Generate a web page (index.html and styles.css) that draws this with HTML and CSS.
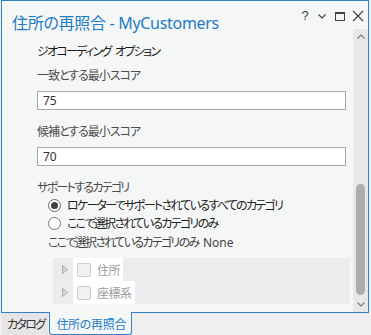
FILE: index.html
```html
<!DOCTYPE html>
<html lang="ja">
<head>
  <meta charset="UTF-8" />
  <title>住所の再照合 - MyCustomers</title>
  <link rel="stylesheet" href="styles.css">
</head>
<body>

  <div class="pane">
    <div class="pane-head">
      <h1 class="pane-title">住所の再照合 - MyCustomers</h1>
      <div class="pane-tools">
        <span class="tool tool-help">?</span>
        <svg class="tool" width="18" height="18" viewBox="0 0 18 18"><polyline points="5.5,7.5 9,11 12.5,7.5" fill="none" stroke="#444" stroke-width="1.2"/></svg>
        <svg class="tool" width="18" height="18" viewBox="0 0 18 18"><rect x="4.5" y="5.5" width="9" height="8" fill="none" stroke="#444" stroke-width="1"/><rect x="4" y="5" width="10" height="2" fill="#444"/></svg>
        <svg class="tool" width="18" height="18" viewBox="0 0 18 18"><path d="M4 4 L14 14 M14 4 L4 14" stroke="#444" stroke-width="1.2"/></svg>
      </div>
    </div>

    <div class="pane-body">
      <div class="options">
        <div class="section-title">ジオコーディング オプション</div>

        <div class="field">
          <div class="field-label">一致とする最小スコア</div>
          <div class="field-input">75</div>
        </div>

        <div class="field">
          <div class="field-label">候補とする最小スコア</div>
          <div class="field-input">70</div>
        </div>

        <div class="category-label">サポートするカテゴリ</div>
        <div class="radio-row">
          <svg width="13" height="13" viewBox="0 0 13 13"><circle cx="6.5" cy="6.5" r="6" fill="#fff" stroke="#666"/><circle cx="6.5" cy="6.5" r="3.5" fill="#404040"/></svg>
          <span>ロケーターでサポートされているすべてのカテゴリ</span>
        </div>
        <div class="radio-row">
          <svg width="13" height="13" viewBox="0 0 13 13"><circle cx="6.5" cy="6.5" r="6" fill="#fff" stroke="#777"/></svg>
          <span>ここで選択されているカテゴリのみ</span>
        </div>

        <div class="selected-note">ここで選択されているカテゴリのみ <span class="latin">None</span></div>

        <div class="category-tree">
          <div class="tree-row">
            <svg class="expander" width="6" height="9" viewBox="0 0 6 9"><path d="M0.5 0.5 L5.5 4.5 L0.5 8.5 Z" fill="#d8d8d8" stroke="#a8a8a8"/></svg>
            <div class="tree-item"><span class="checkbox"></span>住所</div>
          </div>
          <div class="tree-row">
            <svg class="expander" width="6" height="9" viewBox="0 0 6 9"><path d="M0.5 0.5 L5.5 4.5 L0.5 8.5 Z" fill="#d8d8d8" stroke="#a8a8a8"/></svg>
            <div class="tree-item"><span class="checkbox"></span>座標系</div>
          </div>
        </div>
      </div>

      <div class="scrollbar">
        <div class="scroll-btn scroll-up">
          <svg width="8" height="5" viewBox="0 0 8 5"><polyline points="0.5,4.5 4,1 7.5,4.5" fill="none" stroke="#777" stroke-width="1.1"/></svg>
        </div>
        <div class="scroll-track"><div class="scroll-thumb"></div></div>
        <div class="scroll-btn scroll-down">
          <svg width="8" height="5" viewBox="0 0 8 5"><polyline points="0.5,0.5 4,4 7.5,0.5" fill="none" stroke="#777" stroke-width="1.1"/></svg>
        </div>
      </div>
    </div>
  </div>

  <div class="tabs">
    <div class="tab">カタログ</div>
    <div class="tab tab-active">住所の再照合</div>
  </div>

</body>
</html>
```

FILE: styles.css
```css
body {
    margin: 0;
    background-color: #efefef;
    font-family: 'Noto Sans', 'Noto Sans CJK JP', sans-serif;
    font-size: 12px;
    font-feature-settings: "palt";
    letter-spacing: -1.7px;
    word-spacing: 3px;
    color: #333;
}

.latin {
    letter-spacing: 0;
}

.pane {
    margin: 0 2px 0 1px;
    height: 313px;
    box-sizing: border-box;
    border: 1px solid #2f81cc;
    background-color: #f5f7f7;
    display: flex;
    flex-direction: column;
}

.pane-head {
    height: 28px;
    display: flex;
    justify-content: space-between;
    align-items: flex-start;
}

.pane-title {
    margin: 11px 0 0 10px;
    font-size: 16px;
    font-weight: normal;
    line-height: 22px;
    letter-spacing: -0.3px;
    word-spacing: 0;
    color: #1f7bc6;
}

.pane-tools {
    display: flex;
    margin-top: 6px;
    padding-right: 1px;
}

.tool {
    display: block;
}

.tool-help {
    width: 16px;
    text-align: center;
    font-family: 'Liberation Sans', sans-serif;
    font-size: 13px;
    line-height: 18px;
    letter-spacing: 0;
    color: #444;
}

.pane-body {
    flex: 1;
    display: flex;
    overflow: hidden;
}

.options {
    flex: 1;
    padding: 15px 3px 0 35px;
}

.section-title {
    line-height: 16px;
    color: #1a1a1a;
}

.field {
    margin-top: 8px;
}

.field + .field {
    margin-top: 14px;
}

.field-label {
    line-height: 16px;
    letter-spacing: -1px;
    color: #4a4a4a;
}

.field-input {
    margin: 7px 4px 0 0;
    height: 19px;
    box-sizing: border-box;
    border: 1px solid #a8a8a8;
    background-color: #fff;
    padding: 0 5px;
    line-height: 17px;
    letter-spacing: 0;
    color: #333;
}

.category-label {
    margin-top: 14px;
    line-height: 16px;
    color: #4a4a4a;
}

.radio-row {
    display: flex;
    align-items: center;
    gap: 6px;
    height: 18px;
    padding-left: 11px;
    color: #222;
}

.radio-row:first-of-type {
    margin-top: 3px;
}

.selected-note {
    margin-top: 3px;
    padding-left: 11px;
    line-height: 16px;
    color: #444;
}

.category-tree {
    margin: 7px 0 0 16px;
    background-color: #ebeced;
}

.tree-row {
    display: flex;
    align-items: center;
    gap: 5px;
    height: 23px;
    padding-left: 9px;
}

.expander {
    display: block;
}

.tree-item {
    display: flex;
    align-items: center;
    gap: 6px;
    height: 23px;
    padding: 0 3px 0 4px;
    background-color: #fff;
    letter-spacing: -0.5px;
    color: #9c9c9c;
}

.checkbox {
    width: 14px;
    height: 14px;
    box-sizing: border-box;
    border: 1px solid #cdcdcd;
    border-radius: 2px;
    background-color: #f1f1f1;
}

.scrollbar {
    width: 15px;
    background-color: #e8e8e8;
    display: flex;
    flex-direction: column;
}

.scroll-btn {
    display: flex;
    justify-content: center;
    align-items: center;
}

.scroll-up {
    height: 14px;
}

.scroll-down {
    height: 15px;
}

.scroll-track {
    flex: 1;
    display: flex;
    flex-direction: column;
    align-items: center;
}

.scroll-thumb {
    margin-top: auto;
    margin-bottom: 2px;
    width: 9px;
    height: 111px;
    border-radius: 5px;
    background-color: #adadad;
}

.tabs {
    display: flex;
    height: 22px;
    padding-left: 2px;
}

.tab {
    padding: 4px 4px 0 5px;
    line-height: 16px;
    color: #333;
    background-color: #e5e5e5;
    font-size: 12px;
}

.tab-active {
    margin: -1px 0 0 1px;
    padding: 5px 5px 0 6px;
    border: 1px solid #2f81cc;
    border-top: none;
    border-radius: 0 0 3px 3px;
    background-color: #f5f7f7;
    letter-spacing: -0.3px;
    color: #1f7bc6;
}
```
